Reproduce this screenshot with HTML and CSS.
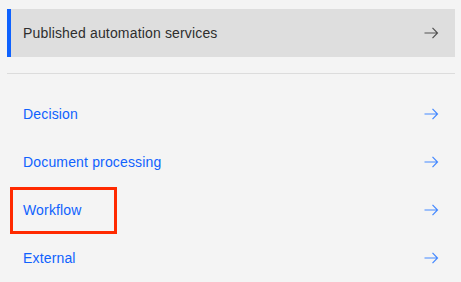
FILE: index.html
```html
<!DOCTYPE html>
<html lang="en">
<head>
    <meta charset="UTF-8">
    <meta name="viewport" content="width=device-width, initial-scale=1.0">
    <title>Automation services</title>
    <link rel="stylesheet" href="styles.css">
</head>
<body>
    <div class="panel">
        <!-- Tile seleccionado -->
        <a href="#" class="tile tile-activo">
            <span>Published automation services</span>
            <svg class="flecha" width="16" height="16" viewBox="0 0 16 16"><path d="M9.5 2.8 L14.5 8 L9.5 13.2 M1.5 8 H14.5" fill="none" stroke="currentColor" stroke-width="1.2"/></svg>
        </a>

        <div class="divisor"></div>

        <div class="lista">
            <a href="#" class="item">
                <span>Decision</span>
                <svg class="flecha" width="16" height="16" viewBox="0 0 16 16"><path d="M9.5 2.8 L14.5 8 L9.5 13.2 M1.5 8 H14.5" fill="none" stroke="currentColor" stroke-width="1.2"/></svg>
            </a>
            <a href="#" class="item">
                <span>Document processing</span>
                <svg class="flecha" width="16" height="16" viewBox="0 0 16 16"><path d="M9.5 2.8 L14.5 8 L9.5 13.2 M1.5 8 H14.5" fill="none" stroke="currentColor" stroke-width="1.2"/></svg>
            </a>
            <a href="#" class="item item-marcado">
                <span>Workflow</span>
                <svg class="flecha" width="16" height="16" viewBox="0 0 16 16"><path d="M9.5 2.8 L14.5 8 L9.5 13.2 M1.5 8 H14.5" fill="none" stroke="currentColor" stroke-width="1.2"/></svg>
            </a>
            <a href="#" class="item">
                <span>External</span>
                <svg class="flecha" width="16" height="16" viewBox="0 0 16 16"><path d="M9.5 2.8 L14.5 8 L9.5 13.2 M1.5 8 H14.5" fill="none" stroke="currentColor" stroke-width="1.2"/></svg>
            </a>
        </div>
    </div>
</body>
</html>
```

FILE: styles.css
```css
body {
    margin: 0;
    background: #f4f4f4;
    font-family: 'Liberation Sans', Arial, sans-serif;
    font-size: 14px;
    letter-spacing: 0.16px;
}

.panel {
    padding: 9px 6px 0 7px;
}

.tile {
    display: flex;
    align-items: center;
    justify-content: space-between;
    height: 48px;
    box-sizing: border-box;
    padding: 0 16px 0 12px;
    background: #dedede;
    border-left: 4px solid #0f62fe;
    color: #2e2e2e;
    text-decoration: none;
}

.tile .flecha {
    color: #525252;
}

.divisor {
    height: 1px;
    background: #dcdcdc;
    margin-top: 16px;
}

.lista {
    display: flex;
    flex-direction: column;
    padding-top: 16px;
}

.item {
    display: flex;
    align-items: center;
    justify-content: space-between;
    height: 48px;
    padding: 0 16px 0 16px;
    color: #0f62fe;
    text-decoration: none;
    position: relative;
}

.item .flecha {
    color: #4589ff;
}

/* Recuadro rojo de anotación */
.item-marcado:after {
    content: "";
    position: absolute;
    left: 3px;
    top: 1px;
    width: 107px;
    height: 47px;
    box-sizing: border-box;
    border: 3px solid #ff2a00;
}
```
